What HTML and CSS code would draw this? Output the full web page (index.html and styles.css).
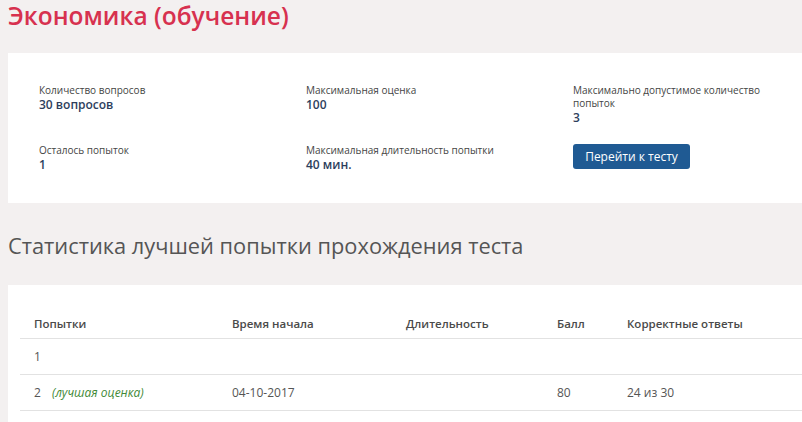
FILE: index.html
```html
<!DOCTYPE html>
<html lang="ru">
<head>
<meta charset="utf-8">
<link rel="stylesheet" href="styles.css">
</head>
<body>
<h1 class="title">Экономика (обучение)</h1>
<section class="card info">
  <div class="grid">
    <div class="item"><div class="label">Количество вопросов</div><div class="value">30 вопросов</div></div>
    <div class="item"><div class="label">Максимальная оценка</div><div class="value">100</div></div>
    <div class="item narrow"><div class="label">Максимально допустимое количество попыток</div><div class="value">3</div></div>
    <div class="item"><div class="label">Осталось попыток</div><div class="value">1</div></div>
    <div class="item"><div class="label">Максимальная длительность попытки</div><div class="value">40 мин.</div></div>
    <div class="item"><button class="btn">Перейти к тесту</button></div>
  </div>
</section>
<h2 class="subtitle">Статистика лучшей попытки прохождения теста</h2>
<section class="card stats">
  <table class="table">
    <thead>
      <tr><th class="c1">Попытки</th><th class="c2">Время начала</th><th class="c3">Длительность</th><th class="c4">Балл</th><th class="c5">Корректные ответы</th></tr>
    </thead>
    <tbody>
      <tr><td>1</td><td></td><td></td><td></td><td></td></tr>
      <tr><td>2 <span class="best">(лучшая оценка)</span></td><td>04-10-2017</td><td></td><td>80</td><td>24 из 30</td></tr>
    </tbody>
  </table>
</section>
</body>
</html>
```
FILE: styles.css
```css
html, body {
  margin: 0;
  padding: 0;
}
body {
  background: #f3f0f0;
  font-family: "Open Sans", "Noto Sans", sans-serif;
  padding-left: 8px;
  overflow: hidden;
  width: 794px;
}
.title {
  margin: 0;
  font-size: 24.5px;
  line-height: 32px;
  font-weight: 600;
  color: #d7314f;
}
.card {
  background: #fff;
  margin-right: -20px;
}
.info {
  margin-top: 21px;
  padding: 31px 0 31px 31px;
  height: 88px;
}
.grid {
  display: grid;
  grid-template-columns: 267px 267px 200px;
  row-gap: 19px;
}
.label {
  font-size: 10px;
  line-height: 13px;
  color: #444;
}
.value {
  font-size: 12px;
  line-height: 15px;
  font-weight: 600;
  color: #2d3e5c;
}
.btn {
  margin-top: 0;
  font-family: inherit;
  font-size: 12px;
  color: #fff;
  background: #1f5a93;
  border: none;
  border-radius: 3px;
  width: 117px;
  height: 25px;
  padding: 0;
}
.subtitle {
  margin: 28px 0 0;
  font-size: 21.8px;
  line-height: 30px;
  font-weight: 400;
  color: #555;
}
.stats {
  margin-top: 24px;
  padding: 23px 0 0 12px;
  height: 130px;
}
.table {
  border-collapse: collapse;
  width: 800px;
  font-size: 12px;
  color: #555;
}
.table th {
  text-align: left;
  font-weight: 600;
  font-size: 11.5px;
  color: #4a4a4a;
  height: 30px;
  padding: 0 0 0 14px;
  border-bottom: 1px solid #e2e2e2;
}
.table td {
  height: 35px;
  padding: 0 0 0 14px;
  border-bottom: 1px solid #e2e2e2;
}
.c1 { width: 184px; }
.c2 { width: 160px; }
.c3 { width: 137px; }
.c4 { width: 56px; }
.best {
  margin-left: 8px;
  font-style: italic;
  font-size: 12px;
  color: #3f8a37;
}
```
